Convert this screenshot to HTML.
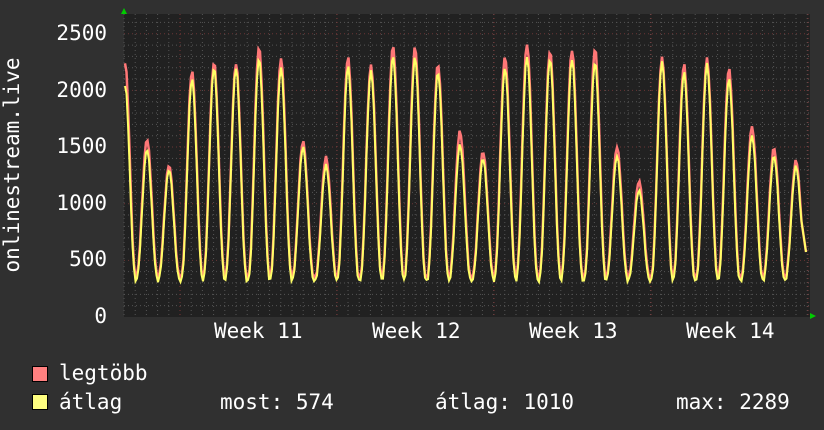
<!DOCTYPE html>
<html><head><meta charset="utf-8"><style>
html,body{margin:0;padding:0;background:#303030;}
body{width:824px;height:430px;overflow:hidden;position:relative;font-family:"DejaVu Sans Mono","Liberation Mono",monospace;color:#fff;}
.t{position:absolute;font-size:21px;white-space:pre;line-height:1;}
</style></head><body>
<svg id="g" width="824" height="430" style="position:absolute;left:0;top:0">
<rect x="124" y="14" width="686" height="303" fill="#212121"/>
<g id="grid"></g>
<path id="red" fill="none" stroke="#ff7777" stroke-width="2.5"/>
<path id="yel" fill="none" stroke="#ffff66" stroke-width="2"/>
<polygon points="121,14 127,14 124,8" fill="#00cc00"/>
<polygon points="810,313 810,319 816,316" fill="#00cc00"/>
<text x="12" y="165" transform="rotate(-90 12 165)" text-anchor="middle" dominant-baseline="central" fill="#fff" font-size="21" font-family="DejaVu Sans Mono, Liberation Mono, monospace">onlinestream.live</text>
</svg>
<div class="t" style="right:717px;top:23px">2500</div>
<div class="t" style="right:717px;top:80px">2000</div>
<div class="t" style="right:717px;top:136px">1500</div>
<div class="t" style="right:717px;top:193px">1000</div>
<div class="t" style="right:717px;top:249px">500</div>
<div class="t" style="right:717px;top:306px">0</div>
<div class="t" style="left:214px;top:321px">Week 11</div>
<div class="t" style="left:372px;top:321px">Week 12</div>
<div class="t" style="left:529px;top:321px">Week 13</div>
<div class="t" style="left:686px;top:321px">Week 14</div>
<div style="position:absolute;left:32px;top:366px;width:14px;height:14px;background:#ff8080;border:1px solid #000"></div>
<div style="position:absolute;left:32px;top:394px;width:14px;height:14px;background:#ffff80;border:1px solid #000"></div>
<div class="t" style="left:59px;top:363px">legtöbb</div>
<div class="t" style="left:59px;top:392px">átlag</div>
<div class="t" style="left:220px;top:392px">most: 574</div>
<div class="t" style="left:435px;top:392px">átlag: 1010</div>
<div class="t" style="left:676px;top:392px">max: 2289</div>
<script>
var g=document.getElementById('grid'),s='';
for(var v=100;v<=2700;v+=100){var y=317-v*0.1133;if(y<14)break;var maj=v%500==0;
s+='<line x1="124" x2="810" y1="'+y+'" y2="'+y+'" stroke="'+(maj?'#6a3535':'#555')+'" stroke-dasharray="1,3"/>';}
for(var x=124;x<810;x+=11.2){s+='<line y1="14" y2="317" x1="'+x+'" x2="'+x+'" stroke="#555" stroke-dasharray="1,3"/>';}
[180,337,494,651,808].forEach(function(x){s+='<line y1="14" y2="317" x1="'+x+'" x2="'+x+'" stroke="#7a3535" stroke-dasharray="1,3"/>';});
g.innerHTML=s;
var P=[[147,1570,1480],[169,1340,1300],[192,2170,2100],[214,2250,2200],[236,2240,2200],[259,2380,2280],[281,2280,2200],[303,1550,1500],[326,1410,1340],[348,2290,2210],[371,2220,2170],[393,2390,2300],[415,2380,2290],[438,2230,2160],[460,1640,1520],[483,1460,1400],[505,2300,2200],[527,2410,2300],[550,2350,2280],[572,2360,2280],[595,2370,2250],[617,1500,1420],[639,1200,1120],[662,2290,2250],[684,2230,2160],[707,2280,2230],[729,2190,2100],[752,1680,1600],[774,1490,1420],[796,1380,1330]];
function val(x,k,tr){var best=tr;for(var i=-1;i<P.length;i++){var p=i<0?[125,2250,2050]:P[i];var d=(x-p[0])/22.4;if(Math.abs(d)>0.5)continue;var f=Math.pow((1+Math.cos(2*Math.PI*d))/2,1.2);var vv=tr+(p[k]-tr)*f;if(vv>best)best=vv;}return best;}
function build(k,tr){var d='';for(var x=125;x<=806;x+=1.5){var v=val(x,k,tr);v+=Math.sin(x*1.7)*12;if(x>800)v=Math.max(v,574+(806-x)*60);var y=317-v*0.1133;d+=(d?'L':'M')+x.toFixed(1)+','+y.toFixed(1);}return d;}
document.getElementById('red').setAttribute('d',build(1,350));
document.getElementById('yel').setAttribute('d',build(2,320));
</script>
</body></html>
